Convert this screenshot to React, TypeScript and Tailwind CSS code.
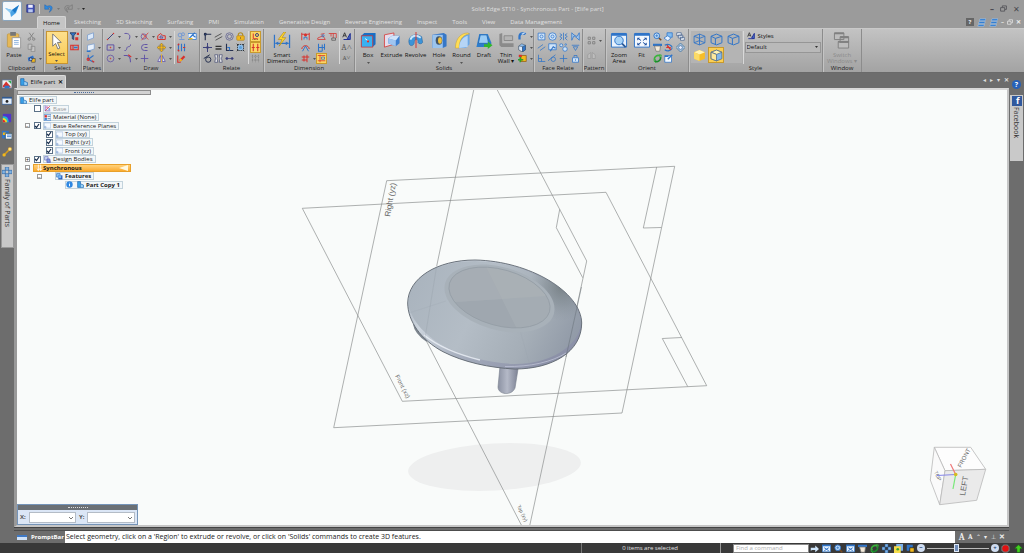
import React from "react";

type Kids = { children?: React.ReactNode };

const B = "#2f74c8";
const N = "#3b3f7a";
const R = "#d8302c";
const Y = "#f2b81c";

const glyphs: Record<string, React.ReactNode> = {
  cut: <g stroke="#777" fill="none"><path d="M3 1l5 7M9 1L4 8" /><circle cx="3" cy="9.5" r="1.6" /><circle cx="9" cy="9.5" r="1.6" /></g>,
  copy: <g stroke="#888" fill="#c4c4c4"><path d="M1.500 1.500h5v7h-5zM5.500 4.500h5v7h-5z" /></g>,
  brush: <g><path d="M1 5l7-3 2 5-8 3z" fill={B} /><path d="M6 6h5v5H6z" fill={Y} stroke="#555" /><circle cx="5" cy="7" r="2" fill="#9cc8ef" stroke="#225" /></g>,
  filter: <g><path d="M0 1h8L5 5v5L3 9V5z" fill={B} stroke="#235" /><path d="M7 7h4v4H7zM9 1h3v3H9z" fill={R} /></g>,
  redbox: <g fill="none" stroke={R} strokeWidth="1.500"><path d="M1 3h10v6H1zM4 3v6" /><path d="M5 6h5" stroke={B} strokeWidth="2" /></g>,
  plane: <path d="M2 4l8-3v7l-8 3z" fill="#dbe9fa" stroke="#7a9ccd" />,
  plane2: <g><path d="M2 3l9-2v7l-9 3z" fill="#e8f1fc" stroke="#7a9ccd" /><path d="M1 11h5" stroke={B} strokeWidth="2" /></g>,
  axes: <g fill="none" stroke={B} strokeWidth="1.500"><path d="M3 1v6l7 4M3 7l7-5" /><circle cx="3" cy="7" r="1.500" stroke={R} /><path d="M8 9l3 2" stroke={R} /></g>,
  line: <g><path d="M2 10L10 2" stroke={N} strokeWidth="1.300" /><circle cx="2" cy="10" r="1" fill={R} /><circle cx="10" cy="2" r="1" fill={R} /></g>,
  arc: <path d="M2 2c6-1 9 3 6 8" fill="none" stroke="#6053a5" strokeWidth="1.300" />,
  trim: <g fill="none" stroke="#6053a5"><circle cx="5" cy="6" r="3.500" /><path d="M2 11L11 1M3 2l8 8" stroke={R} /></g>,
  offset: <g fill="none" stroke={R} strokeWidth="1.300"><path d="M1 10V5l4-3 3 3h3v5z" /><path d="M4 8V6l2-1 2 3z" stroke="#6053a5" /></g>,
  chain: <g fill="none" stroke="#7197d5" strokeWidth="1.200"><circle cx="4" cy="4" r="2.500" /><circle cx="8" cy="3" r="2" /><path d="M6 6v3M3 10h7" /></g>,
  sketch: <g><path d="M0 2h11v8H0z" fill="#eff6ff" stroke={B} /><path d="M2 8l4-4 4 3M9 1L4 6" stroke={B} strokeWidth="1.500" fill="none" /><path d="M1 9h5" stroke={Y} strokeWidth="2" /></g>,
  rect: <g fill="none" stroke="#6053a5" strokeWidth="1.300"><path d="M1.500 2.500h9v7h-9z" /><circle cx="6" cy="6" r=".5" fill={R} stroke={R} /></g>,
  curve: <path d="M2 10c4 1 2-5 5-5s3-2 3-3" fill="none" stroke="#6053a5" strokeWidth="1.300" />,
  cshape: <g fill="none" stroke="#6053a5" strokeWidth="1.300"><path d="M10 2H6a4 4 0 0 0 0 8h4" /><path d="M6 6h4" /></g>,
  move: <path d="M6 0l2.500 3H7v2h2V3.500L12 6 9 8.500V7H7v2h1.500L6 12 3.500 9H5V7H3v1.500L0 6l3-2.500V5h2V3H3.500z" fill={Y} stroke="#72521a" strokeWidth=".5" />,
  updown: <g stroke={B} strokeWidth="1.500" fill="none"><path d="M2 1v10M6 1v10M10 1v10" /><path d="M1 3l2-2M1 9l2 2M8 6h3" stroke={R} /></g>,
  circle: <g fill="none" stroke="#6053a5"><circle cx="6" cy="6" r="4.500" /><circle cx="6" cy="6" r=".5" fill={R} stroke={R} /></g>,
  fillet: <g fill="none" stroke="#6053a5" strokeWidth="1.400"><path d="M1 2h4c4 0 5 3 5 9" /><path d="M7 1l4 3" stroke={R} /></g>,
  cross: <path d="M6 1v10M1 6h10" stroke="#6053a5" strokeWidth="1.200" />,
  mirror: <g><path d="M5 2v8H1zM7 2v8h4z" fill="#dce6f8" stroke="#6053a5" /><path d="M6 0v12" stroke={Y} /></g>,
  pencil: <g><path d="M1 2v9h4" stroke={R} strokeWidth="1.500" fill="none" /><path d="M4 9L10 3" stroke={R} strokeWidth="3" /><path d="M4 9l2-2" stroke={Y} strokeWidth="3" /></g>,
  corner: <g fill="none" stroke="#26304f" strokeWidth="1.500"><path d="M3 11V3h8" /><circle cx="3" cy="3" r="1.200" fill={B} /></g>,
  parallel: <path d="M1 7l9-5M2 11l9-5" stroke="#555" strokeWidth="1.300" />,
  rings: <g fill="none" stroke="#5f6090"><circle cx="6" cy="6" r="5" /><circle cx="6" cy="6" r="2.800" /></g>,
  lock: <g><path d="M3 6V4a3 3 0 0 1 6 0v2" fill="none" stroke="#b08d2a" strokeWidth="1.500" /><rect x="1" y="5" width="10" height="6" rx="1" fill={Y} stroke="#b58a28" /><path d="M6 7v2" stroke="#644" /></g>,
  plus: <g><path d="M6 0v12M0 6h12" stroke={N} strokeWidth="1.300" /><circle cx="6" cy="6" r="1.800" fill={N} /></g>,
  equal: <path d="M2 4.500h8M2 8h8" stroke="#333" strokeWidth="1.700" />,
  perp: <g fill="none" stroke="#26304f" strokeWidth="1.500"><path d="M2 1v9h9" /><path d="M3 6h3v4" stroke={B} /></g>,
  rigid: <g><path d="M2 2h8v8H2z" fill="#91bfe9" stroke="#222" strokeDasharray="2 1" /><path d="M1 1l2 2M9 9l2 2M11 1L9 3M3 9l-2 2" stroke="#222" /><circle cx="6" cy="6" r="2" fill="#5ca0dc" /></g>,
  tangent: <g fill="none" stroke="#26304f" strokeWidth="1.300"><circle cx="7" cy="7.500" r="3.500" /><path d="M1 6l8-5" /></g>,
  sym: <g fill="#eee" stroke="#4b5076"><path d="M1 1h4L4 6l1 5H1l1-5zM11 1H7l1 5-1 5h4l-1-5z" /></g>,
  dots: <g fill={N} stroke={N}><path d="M1 6h10" /><circle cx="2.500" cy="6" r="1.300" /><circle cx="9.500" cy="6" r="1.300" /></g>,
  relA: <g fill="none" stroke={R} strokeWidth="1.300"><path d="M3 2v7h6" /><circle cx="8" cy="4" r="2" stroke={N} /><path d="M2 10h8" stroke="#745a27" strokeDasharray="1 1" /></g>,
  relB: <path d="M3 1v10M9 1v10M1 6h4M7 6h4" stroke={R} strokeWidth="1.400" />,
  grid: <path d="M2 1v10M6 1v10M10 1v10M1 3h10M1 8h10" stroke="#828282" strokeDasharray="2 1" />,
  dimH: <g stroke={R} fill="none" strokeWidth="1.200"><path d="M1 1v10M11 1v10M1 3h10" /><circle cx="6" cy="4" r="1.500" fill={R} /><path d="M4 10V7h4v3" stroke={B} /></g>,
  dimA: <g fill="none" stroke={R} strokeWidth="1.300"><path d="M1 8c1-6 9-6 10 0" /><path d="M2 11l4-7 4 7" stroke={B} /></g>,
  dimC: <g fill="none" stroke={R} strokeWidth="1.300"><path d="M1 8h7M8 1v10M1 4h10M4 2v8" /></g>,
  dimR: <g fill="none" stroke={R}><path d="M1 10h10L8 5 1 8z" /><path d="M5 3l5-1" /><circle cx="8" cy="5" r="1.500" stroke={B} /></g>,
  dimB: <g fill="none" stroke={B} strokeWidth="1.400"><path d="M2 1v10h5M7 2v9M10 1v8M2 6h8" /></g>,
  dimY: <g fill="none" stroke={R}><path d="M1 2h10M1 9h10M4 1v10" /><path d="M6 4h4v3H6z" stroke={B} /></g>,
  dimX: <g fill="none" stroke={R}><path d="M1 2h10v6M4 2v4M7 2v6" /><path d="M5 8h5v3H5z" stroke="#555" /></g>,
  styles: <g><path d="M1 7L3.500 1 6 7M2 5h3" fill="none" stroke="#333" strokeWidth="1.200" /><path d="M2 10h8M7 9l4-7v8z" fill="#4a6fca" stroke="#1f2d94" strokeWidth="1.300" /></g>,
  fr1: <g fill="#cfe3f8" stroke={B}><path d="M1.500 1.500h9v9h-9z" /><circle cx="6" cy="6" r="2" /></g>,
  fr2: <g fill="#cfe3f8" stroke={B}><circle cx="6" cy="6" r="5" /><circle cx="6" cy="6" r="2" /></g>,
  fr3: <g fill="none" stroke={B}><path d="M1 2l3 2-3 2 3 2-3 3M11 2L8 4l3 2-3 2 3 3M6 1v10" /></g>,
  fr4: <path d="M1 1v10l3-6 4 3 3 3V1L8 6 4 4z" fill="#a7caef" stroke={B} />,
  fr5: <path d="M1 7l7-5M4 10l7-5" stroke={B} />,
  fr6: <g fill="#cfe3f8" stroke={B}><path d="M1 1h10v8H1z" /><path d="M3 11l4-6 3 2" fill="none" strokeWidth="1.500" /></g>,
  fr7: <g fill="#cce2f8" stroke={B}><circle cx="3" cy="3" r="2" /><circle cx="8" cy="8" r="3" /><circle cx="9" cy="2" r="1" /></g>,
  fr8: <g fill="none" stroke={B}><path d="M1 3h10M3 5h6L6 10z" /></g>,
  fr9: <path d="M2 1v9h9M2 6h4v4" fill="none" stroke={B} />,
  fr10: <g fill="none" stroke={B}><circle cx="7" cy="7" r="3" /><path d="M0 9l10-8" /></g>,
  fr11: <path d="M6 1v10M1 6h10" stroke={B} />,
  fr12: <g stroke={B} fill="#cfe3f8"><path d="M4 5V2h4v3" fill="none" /><path d="M2 5h8v6H2z" /><path d="M6 7v2" /></g>,
  hook: <g><path d="M2 10V6c0-5 6-5 8-3" fill="none" stroke={B} strokeWidth="3" /><path d="M5 3l4-2" stroke="#cfe4fa" strokeWidth="1.500" /></g>,
  cubeS: <g stroke="#345" strokeWidth=".6"><path d="M1 4l4-3 5 2v6l-4 3-5-3z" fill="#8dbcec" /><path d="M1 4l5 1v7l-5-3z" fill="#dceafa" /><path d="M6 5l4-2v6l-4 3z" fill={B} /></g>,
  addS: <g><path d="M4 2h7v8H4z" fill={Y} stroke="#925d1a" /><path d="M3 4v7M0 7.500h7" stroke="#2ca02c" strokeWidth="2" /><path d="M1 1h4v3H1z" fill={R} /></g>,
  pat: <g fill="none" stroke="#777"><path d="M1.500 1.500h3v3h-3zM7.500 1.500h3v3h-3zM1.500 7.500h3v3h-3zM7.500 7.500h3v3h-3z" /></g>,
  patM: <g fill="#bdbdbd" stroke="#999"><path d="M5 2v8H1V5zM7 2v8h4V5z" /></g>,
  zoom: <g><path d="M7 7l4 4" stroke="#7a4b20" strokeWidth="2" /><circle cx="5" cy="5" r="3.800" fill="#c4e1fb" stroke={B} strokeWidth="1.300" /><path d="M3 5h4M5 3v4" stroke={B} /></g>,
  pan: <g><path d="M4 1h7v6H4z" fill="#82bcf0" stroke={B} /><path d="M0 8l5-3 4 3-4 4z" fill="#e7f2ff" stroke={B} /></g>,
  layers: <g fill="#f5faff" stroke="#47618c"><path d="M1 1h6v4H1zM3 4h6v4H3zM6 7h5v4H6z" /></g>,
  hand: <g><path d="M0 1h12v3H0z" fill={B} /><path d="M2 4h8l-1 7H4z" fill="#f3e9d8" stroke="#777" /></g>,
  spin: <g fill="none" strokeWidth="1.600"><path d="M1 3c5-3 9 0 10 3M1 9c4 3 8 1 10-2" stroke={B} /><path d="M3 6h6M4 3l5 6" stroke={R} /></g>,
  target: <g stroke="#44709e"><path d="M6 0l6 6-6 6-6-6z" fill="#adc8df" /><circle cx="6" cy="6" r="2.500" fill="#eef" /></g>,
  rotate: <g fill="none" strokeWidth="2.200"><path d="M2 8c-1-4 4-8 8-5" stroke="#39b43b" /><path d="M10 4c1 4-4 8-8 5" stroke="#1a8d2b" /><path d="M8 0l4 2-3 3M4 12l-3-3 3-2" stroke="#39b43b" strokeWidth="1" /></g>,
  note: <g><path d="M1 2h9v9H1z" fill="#f3f9ff" stroke={B} /><path d="M5 7l6-6" stroke={B} strokeWidth="2" /><path d="M1 2h5v2H1z" fill={B} /></g>,
  wire: <g fill="none" stroke={B} strokeWidth=".8"><path d="M1 3l5-2 5 2v6l-5 2-5-2zM1 3l5 2 5-2M6 5v6M1 9l5-2 5 2M6 1v6" /></g>,
  wire2: <g fill="none" stroke={B} strokeWidth=".9"><path d="M1 3l5-2 5 2v6l-5 2-5-2zM1 3l4 2 6-2M5 5v6" /></g>,
  gold: <g><path d="M1 3l5-2 5 2v6l-5 2-5-2z" fill="#f7bd28" /><path d="M1 3l5-2 5 2-5 2z" fill="#fff3b4" /><path d="M1 3l5 2v6L1 9z" fill="#fbdb67" /></g>,
  goldE: <g stroke="#4d6a8b" strokeWidth=".7"><path d="M1 3l5-2 5 2v6l-5 2-5-2z" fill="#83b7ea" /><path d="M1 3l5-2 5 2-5 2z" fill="#fff3b4" /><path d="M1 3l5 2v6L1 9z" fill="#fde79a" /></g>,
  part: <g><path d="M1 1h5v4l5 2v4H1z" fill="#38a0e8" stroke="#1961a8" /><path d="M6 5l5 2v4H6z" fill="#9fd4f8" stroke="#1961a8" strokeWidth=".6" /></g>,
  coord: <g fill="none" strokeWidth="1.200"><path d="M2 1v9h9" stroke="#6c4ac0" /><path d="M2 10l8-8" stroke={R} /><circle cx="5" cy="4" r="1.300" stroke="#c352b0" /><circle cx="9" cy="7" r="1" stroke={B} /></g>,
  mat: <g><path d="M0 1h12v10H0z" fill="#eef6ff" stroke={B} /><path d="M1 2h4v4H1z" fill={R} /><path d="M1 7h4v3H1z" fill={B} /><path d="M6 4h5M6 8h5" stroke="#246" /></g>,
  rplane: <g><path d="M.5 1.500h11v9H.5z" fill="#f6faff" stroke="#9eb8dc" /><path d="M.5 10.500v-3h3v3z" fill="#b6cdec" stroke="#7697c7" strokeWidth=".6" /></g>,
  bodies: <g><path d="M1 1h6v6H1z" fill="#c8d8f4" stroke="#5d62b7" /><path d="M5 5h5l1 6H5z" fill="#7c9ae2" stroke="#4d49a6" /></g>,
  features: <g><path d="M1 1h6v6H1z" fill="#8dc5f6" stroke="#2861ae" /><path d="M4 4h7v7H4z" fill="#2457b8" /><path d="M4 4h5v5H4z" fill="#73b6f2" /></g>,
  info: <g><circle cx="6" cy="6" r="5.500" fill="#2e87e2" /><path d="M6 3v1M6 5v4" stroke="#fff" strokeWidth="1.600" /></g>,
  sync: <path d="M4 1v10M8 1v10M2 8l2 3 2-3M6 8l2 3 2-3" stroke="#fff" strokeWidth="1.400" fill="none" />,
  img: <g><path d="M0 1h12v10H0z" fill="#eee" stroke="#568" /><path d="M1 8l4-5 6 7H1z" fill={R} /><path d="M7 2h4v4z" fill="#32a852" /><path d="M3 8h6v3H3z" fill={B} /></g>,
  cam: <g><path d="M0 2h12v8H0z" fill="#e6f0fb" stroke="#315a92" /><path d="M0 1h12v2H0z" fill="#315a92" /><circle cx="6" cy="6.500" r="1.700" fill="#222" /></g>,
  heat: <g><path d="M1 1h10v10H1z" fill="#5036c8" /><path d="M1 4c5-1 7 3 7 7H1z" fill="#24b8c8" /><path d="M1 6c3 0 5 2 5 5H1z" fill="#f0df25" /><path d="M1 8c2 0 3 1 3 3H1z" fill="#e3272b" /></g>,
  book: <g><path d="M0 1h8v9H0z" fill={B} /><path d="M1 3h4v3H1z" fill={Y} /><path d="M4 4h8v7H4z" fill="#f5f9ff" stroke="#356" /><path d="M6 6h5M6 8h5" stroke={B} /></g>,
  key: <g><path d="M3 9l6-6" stroke="#d59e1c" strokeWidth="2" /><circle cx="2.500" cy="9.500" r="2" fill={Y} /><circle cx="9.500" cy="2.500" r="2.300" fill="#ffe27c" stroke="#b97812" strokeWidth=".5" /></g>,
  family: <g fill="#7eb2e4" stroke="#245b9a" strokeWidth=".7"><path d="M4 0h4v4H4zM0 4h4v4H0zM8 4h4v4H8zM4 8h4v4H4z" /></g>,
  save: <g><path d="M1 1h9l1 1v9H1z" fill="#4452b9" stroke="#29347f" /><path d="M3 1h6v4H3z" fill="#eef" /><path d="M3 7h6v4H3z" fill="#b8c8f0" /></g>,
  undo: <path d="M1 1v6h6L5 5c3-2 5 1 2 6 6-4 5-11-3-8z" fill="#2f8be0" stroke="#205ca5" strokeWidth=".6" />,
  redo: <path d="M11 1v6H5l2-2C4 3 2 6 5 11-1 7 0 0 8 3z" fill="none" stroke="#777" />,
  bars: <path d="M4 1h8l-1 2.500H3zM3 4.800h8L10 7.300H2zM2 8.600h8L9 11H1z" fill="#2d7bd2" stroke="#cfe4fb" strokeWidth=".5" />,
  fwd: <path d="M1 9V5h6V2l5 4.500L7 11V8H3z" fill="#cfe6fc" />,
  win: <g><path d="M.5 1.500h11v9H.5z" fill="#e4f0fd" stroke={B} /><path d="M0 1h12v2H0z" fill={B} /><path d="M3 5l6 4M9 5L3 9" stroke={B} strokeWidth="1.300" /></g>,
  shade: <g><path d="M1 1h8v8H1z" fill={B} /><path d="M5 5h6v6H5z" fill={Y} stroke="#222" /></g>,
  shadeY: <g><path d="M3 0h9v9H3z" fill="#7bb0ea" /><path d="M0 3h9v9H0z" fill="#f6dc4a" /><circle cx="5" cy="7" r="1.800" fill="#3aa33a" /></g>,
  up: <path d="M6 1l5 5H8v5H4V6H1z" fill="#43cf20" stroke="#137b0b" strokeWidth=".6" />,
  rec: <g><path d="M3.500.5h5l3 3v5l-3 3h-5l-3-3v-5z" fill="#777" /><circle cx="6" cy="6" r="4.300" fill="#e01111" /></g>,
  restore: <g fill="none" stroke="currentColor" strokeWidth="1.300"><path d="M4 4V1.500h7v6H8.500" /><path d="M1 4.500h7v6H1z" /></g>,
};

function Ico({ n, c = "size-[9px]" }: { n: string; c?: string }) {
  return <svg viewBox="0 0 12 12" className={`${c} shrink-0`} aria-hidden="true">{glyphs[n]}</svg>;
}

function Arrow({ c = "fill-[#555]" }: { c?: string }) {
  return <svg viewBox="0 0 3 2" className={`h-0.5 w-[3px] shrink-0 ${c}`} aria-hidden="true"><path d="M0 0h3L1.500 2z" /></svg>;
}

function Tool({ n, drop, on }: { n?: string; drop?: boolean; on?: boolean }) {
  if (!n) return <span />;
  return (
    <button type="button" aria-label={n} className={`flex h-[11px] items-center gap-[3px] ${drop ? "justify-start" : "justify-self-start"} ${on ? "border border-[#c89a2e] bg-[#fbd663]" : "px-px"}`}>
      <Ico n={n} />
      {drop && <Arrow />}
    </button>
  );
}

function Group({ label, w, children }: Kids & { label: string; w: string }) {
  return (
    <section aria-label={label} className={`flex shrink-0 flex-col border-r border-r-[#8c8c8c] shadow-[inset_1px_0_0_#c4c4c4] ${w}`}>
      <div className="flex h-[35px] items-start justify-center pt-0.5">{children}</div>
      <div className="text-center leading-[8px] text-[#222]">{label}</div>
    </section>
  );
}

function Big({ label, children, drop, w, dim }: Kids & { label: string; drop?: boolean; w: string; dim?: boolean }) {
  return (
    <button type="button" className={`flex shrink-0 flex-col items-center pt-px ${w} ${dim ? "text-[#8b8b8b]" : "text-[#111]"}`}>
      <svg viewBox="0 0 18 18" className="mb-[3px] h-[17px] w-[18px]" aria-hidden="true">{children}</svg>
      <span className="text-center leading-[6px] whitespace-pre">{label}</span>
      {drop && <span className="flex pt-1"><Arrow /></span>}
    </button>
  );
}

const Sep = () => <span className="mx-px h-[33px] w-px shrink-0 bg-[#d9d9d9]" />;

function DrawGroup() {
  const main = ["line", "arc", "trim", "offset", "rect", "curve", "cshape", "move", "circle", "fillet", "cross", "mirror"];
  const plain = new Set(["curve", "cshape", "cross"]);
  return (
    <Group label="Draw" w="w-[97px]">
      <div className="grid grid-cols-[17px_17px_17px_17px]">
        {main.map((n) => <Tool key={n} n={n} drop={!plain.has(n)} />)}
      </div>
      <Sep />
      <div className="grid grid-cols-[11px_11px]">
        <Tool n="chain" /><Tool n="sketch" /><Tool n="updown" /><Tool /><Tool n="pencil" />
      </div>
    </Group>
  );
}

function Ribbon() {
  return (
    <div className="flex h-[45px] border-t border-b border-t-[#c9c9c9] border-b-[#6a6a6a] bg-linear-to-b from-[#c3c3c3] to-[#a3a3a3]">
      <Group label="Clipboard" w="w-11">
        <Big label="Paste" w="w-6">
          <rect x="2" y="2" width="12" height="14" rx="1" fill="#e6b857" stroke="#c39d50" /><rect x="5" y="0" width="6" height="4" fill="#777" /><path d="M7 6h9v11H7z" fill="#fff" stroke="#999" /><path d="M9 9h5M9 11h5M9 13h5" stroke="#8db3dd" />
        </Big>
        <div className="grid grid-cols-[15px]"><Tool n="cut" /><Tool n="copy" /><Tool n="brush" drop /></div>
      </Group>
      <Group label="Select" w="w-[38px]">
        <button type="button" className="flex h-[33px] w-[22px] flex-col items-center border border-[#c79431] bg-linear-to-b from-[#fde08c] to-[#f9c84a] pt-px">
          <svg viewBox="0 0 18 18" className="size-[17px]" aria-hidden="true"><path d="M5 1v13l3-3 2.500 6 2-1-2.500-6h4z" fill="#fff" stroke="#777" /></svg>
          <span className="leading-[8px]">Select</span>
          <span className="flex pt-0.5"><Arrow /></span>
        </button>
        <div className="ml-px grid grid-cols-[11px]"><Tool n="filter" /><Tool n="redbox" /></div>
      </Group>
      <Group label="Planes" w="w-[21px]">
        <div className="grid grid-cols-[15px]"><Tool n="plane" /><Tool n="plane2" drop /><Tool n="axes" /></div>
      </Group>
      <DrawGroup />
      <Group label="Relate" w="w-16">
        <div className="grid grid-cols-[11px_11px_11px_12px]">
          {["corner", "parallel", "rings", "lock", "plus", "equal", "perp", "rigid", "tangent", "sym", "dots"].map((n) => <Tool key={n} n={n} />)}
        </div>
        <Sep />
        <div className="grid w-[11px]"><Tool n="relA" on /><Tool n="relB" on /><Tool n="grid" /></div>
      </Group>
      <Group label="Dimension" w="w-[91px]">
        <Big label={"Smart\nDimension"} w="w-8">
          <path d="M1 3v14M17 3v14M2 12h14" stroke={B} strokeWidth="1.300" /><path d="M2 12l3-2v4zM16 12l-3-2v4z" fill={B} /><path d="M11 0L5 8h4l-3 7 7-9H9l4-6z" fill="#ffd92d" stroke="#b08110" strokeWidth=".6" />
        </Big>
        <div className="ml-0.5 grid grid-cols-[16px_11px_11px]">
          <Tool n="dimH" /><Tool n="dimR" /><Tool n="dimX" />
          <Tool n="dimA" /><Tool n="dimB" /><Tool />
          <Tool n="dimC" drop /><Tool n="dimY" on />
        </div>
        <Sep />
        <div className="grid w-[11px] text-center font-serif">
          <Tool n="styles" />
          <span className="text-[9px] leading-[11px] text-[#555]">A˄</span>
          <span className="text-[7px] leading-[11px] text-[#555]">A˅</span>
        </div>
      </Group>
      <Group label="Solids" w="w-[179px]">
        <Big label="Box" w="w-[23px]" drop>
          <path d="M2 4l3-3h12v12l-3 3H2z" fill="#186fc6" /><path d="M2 4h12v12H2z" fill="#38b1f2" stroke={R} strokeWidth=".8" /><path d="M6 7l4 3" stroke="#fff" /><circle cx="9" cy="10" r="1.200" fill={R} />
        </Big>
        <Big label="Extrude" w="w-6">
          <path d="M1 3l10-2v12L1 16z" fill="#e5ddec" stroke={R} strokeWidth=".8" /><path d="M5 7l4-3h8v8l-4 3-8-3z" fill="#3c7fd0" /><path d="M5 7l8 2v6l-8-3z" fill="#9fc5f0" /><path d="M5 7l4-3h8l-4 5z" fill="#cfe3f9" />
        </Big>
        <Big label="Revolve" w="w-6">
          <path d="M2 13C-1 5 8 0 15 5l1 6c-1 2-4 2-5 0 1-4-4-5-4 1-1 3-4 3-5 1z" fill="#3c94d9" stroke="#25639f" strokeWidth=".6" /><path d="M3 8C5 3 10 3 14 6" stroke="#c8e6fb" strokeWidth="2" fill="none" /><path d="M9 0v17" stroke={R} />
        </Big>
        <Big label="Hole" w="w-[23px]" drop>
          <path d="M2 3l12-2 3 2v12l-4 2H2z" fill="#3677c8" /><path d="M2 3h11v14H2z" fill="#9bc4ee" /><ellipse cx="9" cy="9" rx="3.500" ry="4.500" fill="#456" /><ellipse cx="10" cy="9" rx="2" ry="3.500" fill="#f1c23e" />
        </Big>
        <Big label="Round" w="w-[22px]" drop>
          <path d="M2 17C2 7 8 1 17 1v12l-4 4z" fill="#69a6e5" /><path d="M2 17C2 7 8 1 15 1l2 1C9 3 6 9 6 17z" fill="#ffdd55" stroke="#d3a028" strokeWidth=".5" /><path d="M6 17C6 9 11 5 15 4v12z" fill="#b6d5f6" />
        </Big>
        <Big label="Draft" w="w-[23px]">
          <path d="M4 2h9l4 10-3 4H1z" fill="#2e7dcc" /><path d="M5 3h7l2 9H3z" fill="#9accf5" stroke="#266bb6" /><path d="M9 13h4v-3l5 4-5 4v-2H9z" fill="#32b52c" />
        </Big>
        <Big label={"Thin\nWall ▾"} w="w-[21px]">
          <path d="M2 2l3-1v11h12v4H4l-2-2z" fill="#8b8b8b" /><path d="M7 4h9v5H7z" fill="#b4b4b4" stroke="#888" />
        </Big>
        <div className="grid grid-cols-[15px]"><Tool n="hook" drop /><Tool n="cubeS" drop /><Tool n="addS" drop /></div>
      </Group>
      <Group label="Face Relate" w="w-[49px]">
        <div className="grid grid-cols-[11px_11px_12px_11px]">
          {[1, 2, 3, 4, 5, 6, 7, 8, 9, 10, 11, 12].map((i) => <Tool key={i} n={`fr${i}`} />)}
        </div>
      </Group>
      <Group label="Pattern" w="w-[23px]">
        <div className="grid gap-1 pt-1"><Tool n="pat" drop /><Tool n="patM" /></div>
      </Group>
      <Group label="Orient" w="w-[83px]">
        <Big label={"Zoom\nArea"} w="w-6">
          <path d="M1 2h16v14H1z" fill="#e8f2fd" stroke={B} /><path d="M1 1h16v3H1z" fill={B} /><path d="M12 12l4 4" stroke="#2c5a96" strokeWidth="2" /><circle cx="9" cy="9" r="4.500" fill="#a6d2f6" stroke={B} />
        </Big>
        <Big label="Fit" w="w-[21px]">
          <path d="M1 2h16v14H1z" fill="#f3f8fe" stroke={B} /><path d="M1 1h16v3H1z" fill={B} /><path d="M4 6h3L4 9zM14 6h-3l3 3zM4 14h3l-3-3zM14 14h-3l3-3z" fill="#1d4f9e" /><path d="M5 7l3 2M13 7l-3 2M5 13l3-2M13 13l-3-2" stroke="#1d4f9e" />
        </Big>
        <div className="grid grid-cols-[11px_12px_12px]">
          {["zoom", "pan", "layers", "hand", "spin", "target", "rotate", "note"].map((n) => <Tool key={n} n={n} />)}
        </div>
      </Group>
      <Group label="Style" w="w-[134px]">
        <div className="grid grid-cols-[17px_17px_17px] place-items-center bg-[#b4b4b4]">
          {["wire", "wire2", "wire2", "gold", "goldE"].map((n, i) => (
            <button key={i} type="button" aria-label={n} className={`grid size-4 place-items-center ${n === "goldE" ? "border border-[#c89a2e] bg-[#fbcf55]" : ""}`}>
              <Ico n={n} c="size-[13px]" />
            </button>
          ))}
        </div>
        <Sep />
        <div className="flex w-[76px] flex-col gap-0.5 pt-px">
          <span className="flex items-center gap-[3px] pl-0.5 leading-[8px]"><Ico n="styles" c="size-2" />Styles</span>
          <div className="relative">
            <select aria-label="Style" className="h-[11px] w-full appearance-none border border-[#969696] bg-[#b9b9b9] pl-px leading-[9px]"><option>Default</option></select>
            <span className="pointer-events-none absolute top-1 right-[3px] flex"><Arrow c="fill-[#333]" /></span>
          </div>
        </div>
      </Group>
      <Group label="Window" w="w-[39px]">
        <Big label={"Switch\nWindows ▾"} w="w-8" dim>
          <g fill="#bdbdbd" stroke="#808080"><path d="M1 1h10v7H1zM7 5h9v6H7zM5 10h11v7H5z" /><path d="M1 1.500h10M7 5.500h9M5 10.500h11" strokeWidth="2" /></g>
        </Big>
      </Group>
    </div>
  );
}

function Header() {
  const tabs = ["Sketching", "3D Sketching", "Surfacing", "PMI", "Simulation", "Generative Design", "Reverse Engineering", "Inspect", "Tools", "View", "Data Management"];
  return (
    <header className="relative flex h-7 flex-col bg-[#9b9b9b]">
      <button type="button" aria-label="Application menu" className="absolute top-px left-0.5 size-5 rounded-[2px] border border-[#8aa5bd] bg-[#f4f8fb]">
        <svg viewBox="0 0 18 18" className="size-full" aria-hidden="true"><path d="M2 6l7 2 7-5-3 8-5 4-1-5z" fill="#4ba3e5" /><path d="M2 6l7 2-2 3z" fill="#8ccaf3" /><path d="M9 8l7-5-4 8z" fill="#1c78c7" /></svg>
      </button>
      <div className="flex h-4 items-center pt-px pl-[26px]">
        <div className="flex w-14 items-center gap-1">
          <Ico n="save" /><span className="h-2.5 w-px bg-[#ccc]" /><Ico n="undo" /><Arrow c="fill-[#777]" /><Ico n="redo" /><Arrow c="fill-[#888]" />
        </div>
        <span className="flex"><Arrow c="fill-[#222]" /></span>
        <h1 className="flex-1 text-center leading-[8px] text-[#dedede]">Solid Edge ST10 - Synchronous Part - [Elife part]</h1>
        <div className="flex w-[34px] items-center justify-between pr-1 text-[8px] leading-[8px] text-[#4a4a50]"><b>–</b><Ico n="restore" c="size-[7px]" /><span>✕</span></div>
      </div>
      <nav className="flex h-3 items-center pl-[37px]">
        <a href="#home" className="mr-2 flex h-3 w-[29px] items-center justify-center rounded-t-[2px] border border-b-0 border-[#d5d5d5] bg-[#c5c5c5] text-[#111]">Home</a>
        <div className="flex gap-[15px] text-[#e2e2e2]">
          {tabs.map((t) => <a key={t} href="#tab" className="whitespace-nowrap">{t}</a>)}
        </div>
        <div className="ml-auto flex items-center gap-[3px] pr-[3px] text-[#eee]">
          <span className="grid size-2 place-items-center bg-[#666] font-bold">?</span><Ico n="bars" /><Ico n="bars" /><b>–</b><Ico n="restore" c="size-1.5" /><b>✕</b>
        </div>
      </nav>
    </header>
  );
}

type Row = { pad: string; exp?: string; check?: boolean; icon: string; icon2?: string; text: string; bold?: boolean; muted?: boolean };
const rows: Row[] = [
  { pad: "pl-0.5", icon: "part", text: "Elife part" },
  { pad: "pl-4", check: false, icon: "coord", text: "Base", muted: true },
  { pad: "pl-[26px]", icon: "mat", text: "Material (None)" },
  { pad: "pl-2", exp: "−", check: true, icon: "rplane", text: "Base Reference Planes" },
  { pad: "pl-7", check: true, icon: "rplane", text: "Top (xy)" },
  { pad: "pl-7", check: true, icon: "rplane", text: "Right (yz)" },
  { pad: "pl-7", check: true, icon: "rplane", text: "Front (xz)" },
  { pad: "pl-2", exp: "+", check: true, icon: "bodies", text: "Design Bodies" },
  { pad: "pl-2", exp: "−", icon: "sync", text: "Synchronous", bold: true },
  { pad: "pl-5", exp: "−", icon: "features", text: "Features", bold: true },
  { pad: "pl-12", icon: "info", icon2: "part", text: "Part Copy 1", bold: true },
];

function Tree() {
  return (
    <aside aria-label="PathFinder" className="relative w-[134px]">
      <div className="grid h-[5px] place-items-center border border-[#8c8c8c] bg-[#d2d2d2]"><span className="w-5 border-t border-dotted border-[#4c6d9e]" /></div>
      <ul className="flex h-[94px] flex-col pt-px">
        {rows.map((r) => {
          const sync = r.text === "Synchronous";
          return (
            <li key={r.text} className={`flex min-h-0 flex-1 items-center ${r.pad}`}>
              {r.exp && <button type="button" className={`grid size-[5px] shrink-0 place-items-center border border-[#9a9a9a] bg-white text-[5px] leading-none ${r.text === "Features" ? "mr-[13px]" : "mr-[3px]"}`}>{r.exp}</button>}
              {r.check !== undefined && (
                <span className="relative mr-0.5 grid size-2 shrink-0 place-items-center">
                  <input type="checkbox" aria-label={r.text} defaultChecked={r.check} className="peer size-[7px] appearance-none border border-[#5b7187] bg-white" />
                  <svg viewBox="0 0 8 8" className="pointer-events-none absolute inset-0 hidden size-2 peer-checked:block" aria-hidden="true"><path d="M2 4l1.500 1.500L6 2" fill="none" stroke="#1a2f4c" strokeWidth="1.200" /></svg>
                </span>
              )}
              <span className={`flex h-2 items-center whitespace-nowrap ${r.bold ? "font-bold" : ""} ${r.muted ? "text-[#999]" : "text-[#1c1c1c]"} ${sync ? "w-[98px] border border-[#e8a02a] bg-linear-to-b from-[#ffd27a] to-[#fbab2a] px-0.5" : "gap-0.5 border border-[#c3d3dc] bg-[#f3f7f9] pr-0.5"}`}>
                <Ico n={r.icon} c={r.icon2 ? "size-[7px] mr-0.5" : "size-[7px]"} />
                {r.icon2 && <Ico n={r.icon2} c="size-[7px]" />}
                {r.text}
                {sync && <svg viewBox="0 0 9 6" className="ml-auto h-1.5 w-[9px]" aria-hidden="true"><path d="M0 3l9-3v6z" fill="#fff8e0" /></svg>}
              </span>
            </li>
          );
        })}
      </ul>
    </aside>
  );
}

const BODY = "M407.700 303C407.700 321 421 340 443 351.700C463 362 490 368 515 369C552 369 581.700 352 581.700 323C581 292 530 261 475 260C437 260 408 278 407.700 303Z";

function Scene() {
  return (
    <svg viewBox="17 90 990 435" preserveAspectRatio="xMidYMid slice" className="absolute inset-0 size-full" role="img" aria-label="Part view">
      <defs>
        <linearGradient id="rim" x1="0" y1=".3" x2="1" y2=".6"><stop offset="0" stopColor="#aab4be" /><stop offset=".4" stopColor="#b4bdc6" /><stop offset=".75" stopColor="#a5aeb7" /><stop offset="1" stopColor="#929ba8" /></linearGradient>
        <linearGradient id="edge" x1="0" y1="0" x2="1" y2=".5"><stop offset="0" stopColor="#8d98a5" /><stop offset=".3" stopColor="#ccd4dd" /><stop offset=".6" stopColor="#a5adbc" /><stop offset="1" stopColor="#8c91a8" /></linearGradient>
        <linearGradient id="stem"><stop offset="0" stopColor="#8b91a2" /><stop offset=".45" stopColor="#b4b9c7" /><stop offset="1" stopColor="#7b8092" /></linearGradient>
        <radialGradient id="dark" gradientUnits="userSpaceOnUse" cx="562" cy="287" r="34"><stop offset="0" stopColor="#6f787c" stopOpacity=".8" /><stop offset=".5" stopColor="#79838a" stopOpacity=".45" /><stop offset="1" stopColor="#8a949c" stopOpacity="0" /></radialGradient>
        <clipPath id="bodyclip"><path d={BODY} /></clipPath>
        <clipPath id="cap"><ellipse cx="499.500" cy="297.500" rx="52" ry="28" transform="rotate(15.800 499.500 297.500)" /></clipPath>
      </defs>
      <ellipse cx="494.500" cy="467" rx="86.500" ry="23.500" transform="rotate(-3 494.500 467)" fill="#eeefef" />
      <g fill="none" stroke="#8c8f8f" strokeWidth=".7">
        <path d="M386.700 180.700L674.700 166.300L622 413L333.700 427.700Z" />
        <path d="M302.300 208.300L606 192.300L706.700 385.700L402.300 401.300Z" />
        <path d="M473.700 90L436.700 266M425 338.300L521.700 525.700M497.300 90L586.700 261L529.700 525.700" />
        <path d="M656.700 167L643.300 228L661.300 227.500M681.700 337.500L662.300 338.500L687.700 386.500M559.700 209.300L556.300 227.700L582.700 277.700" />
      </g>
      <path d="M500 366L498 387C498 395 512 396 515 388L518.500 366Z" fill="url(#stem)" stroke="#777d8b" strokeWidth=".6" />
      <path d="M414 324C415 331 420 336 427 341" fill="none" stroke="#7d858e" strokeWidth="2" />
      <path d={BODY} fill="url(#edge)" stroke="#5f676f" strokeWidth=".9" />
      <path d="M408.500 302C409 317 423 335 445 346.500C465 357 490 363 514 364C548 364.500 580 347 581 322C580 293 529 262 475 261C438 261 409 279 408.500 302Z" fill="url(#rim)" />
      <path d="M424 335C440 348 460 355 480 360" fill="none" stroke="#eef3f8" strokeWidth="1.600" opacity=".8" />
      <path d="M505 366.500C530 367 552 362 566 353" fill="none" stroke="#c3c7da" strokeWidth="1" opacity=".7" />
      <g clipPath="url(#bodyclip)"><circle cx="562" cy="287" r="34" fill="url(#dark)" /></g>
      <path d="M409 313L446 301M520 330L530 366M552 304L581 322" stroke="#98a2ac" strokeWidth=".5" opacity=".4" />
      <ellipse cx="499.500" cy="298.500" rx="56.500" ry="31.500" transform="rotate(15.800 499.500 298.500)" fill="#a8b1b9" />
      <g clipPath="url(#cap)"><path d="M440 260h120v80H440z" fill="#a4acb3" /><path d="M480 255l22 44 60-4v-34z" fill="#a9b0b5" /><path d="M440 303l62-4 22 44h-84z" fill="#9fa7af" /><path d="M480 255l22 44-62 4v-48z" fill="#a6adb4" /></g>
      <ellipse cx="499.500" cy="297.500" rx="52" ry="28" transform="rotate(15.800 499.500 297.500)" fill="none" stroke="#969fa7" strokeWidth=".9" />
      <path d="M436.700 266L425 338" stroke="#7f8890" strokeWidth=".5" opacity=".35" /><path d="M581.500 287L566 357" stroke="#5e676e" strokeWidth=".7" opacity=".6" />
      <g fontSize="8" fill="#666" fontFamily="Liberation Sans, sans-serif">
        <text transform="translate(390 217) rotate(-80)">Right (yz)</text>
        <text fontSize="6" transform="translate(395 376) rotate(63)">Front (xz)</text>
        <text fontSize="5" transform="translate(517 506) rotate(64)">Top (xy)</text>
      </g>
      <g stroke="#b9b9b9" strokeWidth=".8">
        <path d="M934.300 447.300H970.700L985.700 469.300L945 470.700Z" fill="#fdfdfd" /><path d="M934.300 447.300L945 470.700L939.700 504.700L930.300 480Z" fill="#fafafa" /><path d="M945 470.700L985.700 469.300L976.700 500.300L939.700 504.700Z" fill="#eaeaea" />
      </g>
      <g fontFamily="Liberation Sans, sans-serif" fill="#686868" fontSize="8"><text transform="translate(965 496) rotate(-80)">LEFT</text><text fontSize="6" transform="translate(961 468) rotate(-62)">FRONT</text><text fontSize="5" transform="translate(934 472) rotate(65)">TOP</text></g>
      <g strokeWidth="1.200"><path d="M955.700 474.500L937 475.500" stroke="#8585e8" /><path d="M955.700 474.500L950.500 464" stroke="#ee7777" /><path d="M955.700 474.500L953 489" stroke="#78e878" /></g>
      <circle cx="955.700" cy="474.500" r="1.800" fill="#d4bb21" />
    </svg>
  );
}

function CoordinateBox() {
  return (
    <div className="absolute bottom-0 left-0 w-[121px] border border-[#7594b8] bg-[#dbe6f6]">
      <div className="grid h-[5px] place-items-center bg-[#6b7075]"><span className="w-5 border-t border-dotted border-[#ddd]" /></div>
      <div className="flex h-3.5 items-center gap-[3px] px-0.5">
        {["X:", "Y:"].map((l) => (
          <label key={l} className="flex flex-1 items-center gap-[3px] font-bold text-[#555]">
            {l}
            <span className="relative flex-1">
              <select className="block h-[11px] w-full appearance-none border border-[#b4bcc6] bg-white"><option> </option></select>
              <svg viewBox="0 0 6 4" className="pointer-events-none absolute top-1 right-0.5 h-1 w-1.5" aria-hidden="true"><path d="M1 1l2 2 2-2" stroke="#777" fill="none" /></svg>
            </span>
          </label>
        ))}
      </div>
    </div>
  );
}

function StatusBar() {
  return (
    <footer className="flex h-2.5 items-center bg-[#393939] text-[#e5e5e5]">
      <div className="flex h-full flex-1 items-center justify-end"><span className="h-full border-l border-[#777] pr-10" /><span className="mr-[42px] leading-[8px]">0 items are selected</span></div>
      <span className="mr-3 h-full w-px bg-[#999]" />
      <input aria-label="Find a command" placeholder="Find a command" className="h-[9px] w-[76px] border border-[#888] bg-white px-0.5 leading-[7px] placeholder:text-[#b0b0b0]" />
      <div className="flex items-center gap-[3px] pl-px">
        {["fwd", "win", "zoom", "win", "hand", "rotate", "family", "shadeY", "shade"].map((n, i) => <button key={i} type="button" aria-label={n}><Ico n={n} c="block size-[9px]" /></button>)}
      </div>
      <div className="flex items-center gap-0.5 pl-0.5">
        <span className="grid size-2 place-items-center rounded-full bg-[#cfdcf0] font-bold text-[#223d70]">−</span>
        <input type="range" aria-label="Zoom" defaultValue="47" className="h-2 w-[62px] appearance-none bg-[linear-gradient(#bbb,#bbb)] bg-size-[100%_1px] bg-center bg-no-repeat [&::-webkit-slider-thumb]:h-2 [&::-webkit-slider-thumb]:w-[5px] [&::-webkit-slider-thumb]:appearance-none [&::-webkit-slider-thumb]:border [&::-webkit-slider-thumb]:border-[#dfe8f6] [&::-webkit-slider-thumb]:bg-[#6f8cb8]" />
        <span className="grid size-2 place-items-center rounded-full bg-[#cfdcf0] font-bold text-[#223d70]">+</span>
      </div>
      <span className="ml-0.5 flex w-[23px] shrink-0 items-center gap-1"><Ico n="rec" /><Ico n="up" /></span>
    </footer>
  );
}

export default function App() {
  return (
    <div className="flex h-screen flex-col overflow-hidden bg-[#6d6d6d] font-['Open_Sans','Noto_Sans',sans-serif] text-[6px] leading-[8px] text-[#111]">
      <Header />
      <Ribbon />
      <div className="flex min-h-0 flex-1">
        <aside className="flex w-3.5 flex-col items-center gap-[7px] pt-1.5">
          {["img", "cam", "heat", "book", "key"].map((n) => <button key={n} type="button" aria-label={n}><Ico n={n} c="block size-[10px]" /></button>)}
          <button type="button" className="flex h-[84px] w-[13px] flex-col items-center gap-0.5 border border-[#999] bg-[#c8c8c8] pt-0.5">
            <Ico n="family" c="size-[10px]" />
            <span className="text-[7px] leading-[11px] whitespace-nowrap text-[#333] [writing-mode:vertical-rl]">Family of Parts</span>
          </button>
        </aside>
        <div className="flex min-w-0 flex-1 flex-col">
          <div className="flex h-[15px] items-end pl-[3px]">
            <div className="flex h-[13px] w-[49px] items-center justify-between rounded-t-[2px] border border-b-0 border-[#ddd] bg-[#c4c4c4] px-0.5"><Ico n="part" c="size-2" /><span>Elife part</span><button type="button" aria-label="Close tab" className="font-bold">✕</button></div>
            <div className="ml-auto flex gap-1 pb-1 leading-[7px] text-[#ddd]"><span>◂</span><span>▸</span><span>▾</span><b>✕</b></div>
          </div>
          <main className="relative min-h-0 flex-1 overflow-hidden border-2 border-l-[3px] border-[#c6c6c6] border-t-[#d9d9d9] border-l-[#999] bg-[#f9fbfa]">
            <Scene />
            <Tree />
            <CoordinateBox />
          </main>
          <div className="flex h-4 items-end border-t border-[#444] bg-[#6d6d6d]">
            <div className="flex h-[13px] flex-1 items-center border-t border-[#4d4d4d]">
              <span className="flex w-[51px] items-center gap-1 pl-[3px] font-bold text-white"><svg viewBox="0 0 10 5" className="h-[5px] w-2.5" aria-hidden="true"><path d="M0 0h10v5H0z" fill="#cfe2f8" /><path d="M0 0h10v2H0z" fill="#3e79c6" /></svg>PromptBar</span>
              <output className="h-3 flex-1 bg-white pl-px text-[7px] leading-[12px] text-[#222]">Select geometry, click on a 'Region' to extrude or revolve, or click on 'Solids' commands to create 3D features.</output>
              <span className="flex w-[54px] items-center justify-around px-0.5 text-[#eee]"><b className="font-serif text-[9px]">A</b><b className="font-serif text-[7px]">A</b><span>⌃</span><span>▾</span><span>⊥</span><b className="text-[7px]">✕</b></span>
            </div>
          </div>
        </div>
        <aside className="flex w-[15px] flex-col items-center pt-[7px]">
          <button type="button" aria-label="Help" className="mb-1.5 grid size-[9px] place-items-center rounded-full bg-[#2761b8] text-[7px] font-bold text-white">?</button>
          <button type="button" className="flex h-[66px] w-[13px] flex-col items-center gap-px bg-[#c9c9c9] pt-px">
            <span className="grid size-2.5 place-items-end bg-[#31599d] pr-0.5 text-[9px] leading-[10px] font-bold text-white">f</span>
            <span className="text-[7px] leading-[11px] text-[#333] [writing-mode:vertical-rl]">Facebook</span>
          </button>
        </aside>
      </div>
      <StatusBar />
    </div>
  );
}
